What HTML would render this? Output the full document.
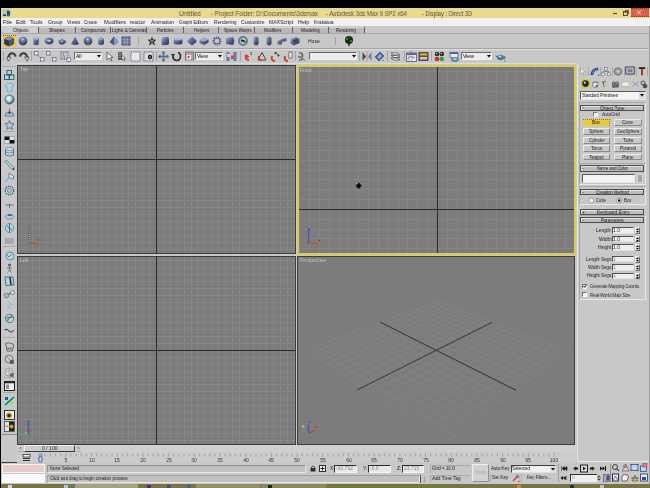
<!DOCTYPE html>
<html><head><meta charset="utf-8"><style>*{margin:0;padding:0;box-sizing:border-box}
html,body{width:650px;height:488px;overflow:hidden;background:#c8c8c8;font-family:"Liberation Sans",sans-serif;position:relative}
.a{position:absolute}
.t{position:absolute;white-space:nowrap;line-height:1;font-family:"Liberation Sans",sans-serif}
svg{overflow:visible}
.t{will-change:transform}</style></head><body>
<div class="a" style="left:0px;top:0px;width:650px;height:8px;background:#000"></div>
<div class="a" style="left:0px;top:8px;width:650px;height:10px;background:#e9d98b"></div>
<div class="a" style="left:0px;top:18px;width:650px;height:8px;background:#f0f0f0"></div>
<svg class="a" style="left:1.5px;top:8.5px" width="9" height="9" viewBox="0 0 9 9"><rect x="0.5" y="0.5" width="8" height="7" fill="#a8c8d8"/><path d="M5 1.5 L8 2 L8 7 L5 7Z" fill="#404860"/><rect x="1" y="5.5" width="3" height="1.5" fill="#303850"/><circle cx="6.8" cy="6.5" r="1" fill="#10a020"/></svg>
<div class="t" style="left:179px;top:10.2px;font-size:7px;color:#585340;transform:scaleX(0.9269);transform-origin:0 0;">Untitled</div>
<div class="t" style="left:210.5px;top:10.2px;font-size:7px;color:#585340;transform:scaleX(0.8731);transform-origin:0 0;">- Project Folder: D:\Documents\3dsmax</div>
<div class="t" style="left:325.5px;top:10.2px;font-size:7px;color:#585340;transform:scaleX(0.8461);transform-origin:0 0;">- Autodesk 3ds Max 9 SP2 x64</div>
<div class="t" style="left:421.5px;top:10.2px;font-size:7px;color:#585340;transform:scaleX(0.8034);transform-origin:0 0;">- Display : Direct 3D</div>
<div class="a" style="left:613px;top:13px;width:3.5px;height:1px;background:#5a3a30"></div>
<svg class="a" style="left:622px;top:9px" width="7" height="7" viewBox="0 0 7 7"><rect x="1.5" y="2.5" width="4" height="4" fill="none" stroke="#4a4030" stroke-width="0.9"/><path d="M3 1.5H6.5V5" fill="none" stroke="#4a4030" stroke-width="0.8"/><circle cx="3.5" cy="3.5" r="0.8" fill="#a02020"/></svg>
<div class="a" style="left:630.5px;top:8px;width:18.5px;height:9px;background:#d9604b;border-top:1px dotted #a03028;border-bottom:1px dotted #a03028"></div>
<svg class="a" style="left:636px;top:10px" width="6" height="5" viewBox="0 0 6 5"><path d="M1 0.5L5 4.5M5 0.5L1 4.5" stroke="#f0e4e0" stroke-width="1"/></svg>
<div class="t" style="left:3.2px;top:18.8px;font-size:6.2px;color:#1a1a1a;transform:scaleX(0.8914);transform-origin:0 0;">File</div>
<div class="t" style="left:16.1px;top:18.8px;font-size:6.2px;color:#1a1a1a;transform:scaleX(0.8808);transform-origin:0 0;">Edit</div>
<div class="t" style="left:29.9px;top:18.8px;font-size:6.2px;color:#1a1a1a;transform:scaleX(0.8718);transform-origin:0 0;">Tools</div>
<div class="t" style="left:47.5px;top:18.8px;font-size:6.2px;color:#1a1a1a;transform:scaleX(0.8371);transform-origin:0 0;">Group</div>
<div class="t" style="left:66.5px;top:18.8px;font-size:6.2px;color:#1a1a1a;transform:scaleX(0.8107);transform-origin:0 0;">Views</div>
<div class="t" style="left:84.4px;top:18.8px;font-size:6.2px;color:#1a1a1a;transform:scaleX(0.6997);transform-origin:0 0;">Create</div>
<div class="t" style="left:103.5px;top:18.8px;font-size:6.2px;color:#1a1a1a;transform:scaleX(0.8762);transform-origin:0 0;">Modifiers</div>
<div class="t" style="left:130.3px;top:18.8px;font-size:6.2px;color:#1a1a1a;transform:scaleX(0.7890);transform-origin:0 0;">reactor</div>
<div class="t" style="left:151.0px;top:18.8px;font-size:6.2px;color:#1a1a1a;transform:scaleX(0.8432);transform-origin:0 0;">Animation</div>
<div class="t" style="left:179.2px;top:18.8px;font-size:6.2px;color:#1a1a1a;transform:scaleX(0.7620);transform-origin:0 0;">Graph Editors</div>
<div class="t" style="left:213.5px;top:18.8px;font-size:6.2px;color:#1a1a1a;transform:scaleX(0.7947);transform-origin:0 0;">Rendering</div>
<div class="t" style="left:241.3px;top:18.8px;font-size:6.2px;color:#1a1a1a;transform:scaleX(0.8038);transform-origin:0 0;">Customize</div>
<div class="t" style="left:269.3px;top:18.8px;font-size:6.2px;color:#1a1a1a;transform:scaleX(0.8244);transform-origin:0 0;">MAXScript</div>
<div class="t" style="left:297.9px;top:18.8px;font-size:6.2px;color:#1a1a1a;transform:scaleX(0.8795);transform-origin:0 0;">Help</div>
<div class="t" style="left:313.5px;top:18.8px;font-size:6.2px;color:#1a1a1a;transform:scaleX(0.7874);transform-origin:0 0;">Krakatoa</div>
<div class="a" style="left:2px;top:27px;width:36px;height:6px;background:#cecece"></div>
<div class="t" style="left:12.7px;top:27.6px;font-size:5px;color:#222;transform:scaleX(0.9025);transform-origin:0 0;">Objects</div>
<div class="a" style="left:38px;top:27px;width:37px;height:6px;background:#bababa;border-top:1px solid #d4d4d4"></div>
<div class="t" style="left:48.7px;top:27.6px;font-size:5px;color:#222;transform:scaleX(0.9193);transform-origin:0 0;">Shapes</div>
<div class="a" style="left:75px;top:27px;width:35px;height:6px;background:#bababa;border-top:1px solid #d4d4d4"></div>
<div class="t" style="left:81.2px;top:27.6px;font-size:5px;color:#222;transform:scaleX(0.9085);transform-origin:0 0;">Compounds</div>
<div class="a" style="left:110px;top:27px;width:36px;height:6px;background:#bababa;border-top:1px solid #d4d4d4"></div>
<div class="t" style="left:112.0px;top:27.6px;font-size:5px;color:#222;transform:scaleX(0.8629);transform-origin:0 0;">Lights &amp; Cameras</div>
<div class="a" style="left:146px;top:27px;width:37px;height:6px;background:#bababa;border-top:1px solid #d4d4d4"></div>
<div class="t" style="left:156.7px;top:27.6px;font-size:5px;color:#222;transform:scaleX(0.8651);transform-origin:0 0;">Particles</div>
<div class="a" style="left:183px;top:27px;width:35px;height:6px;background:#bababa;border-top:1px solid #d4d4d4"></div>
<div class="t" style="left:193.5px;top:27.6px;font-size:5px;color:#222;transform:scaleX(0.8878);transform-origin:0 0;">Helpers</div>
<div class="a" style="left:218px;top:27px;width:36px;height:6px;background:#bababa;border-top:1px solid #d4d4d4"></div>
<div class="t" style="left:223.5px;top:27.6px;font-size:5px;color:#222;transform:scaleX(0.9253);transform-origin:0 0;">Space Warps</div>
<div class="a" style="left:254px;top:27px;width:38px;height:6px;background:#bababa;border-top:1px solid #d4d4d4"></div>
<div class="t" style="left:264.3px;top:27.6px;font-size:5px;color:#222;transform:scaleX(0.8622);transform-origin:0 0;">Modifiers</div>
<div class="a" style="left:292px;top:27px;width:36px;height:6px;background:#bababa;border-top:1px solid #d4d4d4"></div>
<div class="t" style="left:300.5px;top:27.6px;font-size:5px;color:#222;transform:scaleX(0.9263);transform-origin:0 0;">Modeling</div>
<div class="a" style="left:328px;top:27px;width:36px;height:6px;background:#bababa;border-top:1px solid #d4d4d4"></div>
<div class="t" style="left:335.7px;top:27.6px;font-size:5px;color:#222;transform:scaleX(0.8666);transform-origin:0 0;">Rendering</div>
<div class="a" style="left:37.5px;top:27px;width:1px;height:6px;background:#606060"></div>
<div class="a" style="left:74.5px;top:27px;width:1px;height:6px;background:#606060"></div>
<div class="a" style="left:109.5px;top:27px;width:1px;height:6px;background:#606060"></div>
<div class="a" style="left:145.5px;top:27px;width:1px;height:6px;background:#606060"></div>
<div class="a" style="left:182.5px;top:27px;width:1px;height:6px;background:#606060"></div>
<div class="a" style="left:217.5px;top:27px;width:1px;height:6px;background:#606060"></div>
<div class="a" style="left:253.5px;top:27px;width:1px;height:6px;background:#606060"></div>
<div class="a" style="left:291.5px;top:27px;width:1px;height:6px;background:#606060"></div>
<div class="a" style="left:327.5px;top:27px;width:1px;height:6px;background:#606060"></div>
<div class="a" style="left:363.5px;top:27px;width:1px;height:6px;background:#606060"></div>
<div class="a" style="left:0px;top:33px;width:650px;height:1px;background:#a8a8a8"></div>
<svg width="0" height="0" style="position:absolute">
<defs>
<radialGradient id="gb" cx="45%" cy="30%" r="70%"><stop offset="0" stop-color="#e0e6f8"/><stop offset="0.25" stop-color="#7a88b4"/><stop offset="0.7" stop-color="#46507a"/><stop offset="1" stop-color="#1e2440"/></radialGradient>
<linearGradient id="gbl" x1="0" y1="0" x2="1" y2="1"><stop offset="0" stop-color="#a8b4d8"/><stop offset="0.45" stop-color="#5c6894"/><stop offset="1" stop-color="#262e50"/></linearGradient>
<radialGradient id="gc" cx="40%" cy="35%" r="65%"><stop offset="0" stop-color="#f0ffff"/><stop offset="0.4" stop-color="#a8dce8"/><stop offset="1" stop-color="#3c6878"/></radialGradient>
</defs></svg>
<div class="a" style="left:3px;top:35px;width:12.5px;height:12px;background:#e4cc3c;border-top:1px dotted #c04a30"></div>
<svg class="a" style="left:4px;top:36px" width="10" height="10" viewBox="0 0 10 10"><path d="M0.5 3 L5 0.8 L9.5 2.5 L9.5 8 L5 10 L0.5 8Z" fill="#2e3658" stroke="#1c2038" stroke-width="0.5"/><path d="M0.5 3 L5 0.8 L9.5 2.5 L5 4.5Z" fill="#8a96c0"/><path d="M5 4.5 L9.5 2.5 L9.5 8 L5 10Z" fill="#4a5582"/></svg>
<svg class="a" style="left:18px;top:36px" width="10" height="10" viewBox="0 0 10 10"><circle cx="5" cy="5" r="4.3" fill="url(#gb)"/></svg>
<svg class="a" style="left:31px;top:36px" width="10" height="10" viewBox="0 0 10 10"><path d="M2 2.5 L8 2.5 L7.5 8.5 Q5 9.8 2.5 8.5Z" fill="url(#gbl)"/><ellipse cx="5" cy="2.5" rx="3" ry="1.3" fill="#a4b0d4"/></svg>
<svg class="a" style="left:44px;top:36px" width="10" height="10" viewBox="0 0 10 10"><ellipse cx="5" cy="5" rx="4.6" ry="3.6" fill="url(#gbl)"/><ellipse cx="5" cy="4.8" rx="2" ry="1" fill="#c8c8c8"/></svg>
<svg class="a" style="left:57px;top:36px" width="10" height="10" viewBox="0 0 10 10"><ellipse cx="5" cy="6" rx="3.2" ry="2.4" fill="url(#gb)"/><path d="M1 4 L2.5 6 L2 6.5Z" fill="#56628c"/><path d="M8 5 Q9.6 5 9 7" stroke="#56628c" fill="none"/><circle cx="5" cy="3.3" r="0.8" fill="#6c7aa6"/></svg>
<svg class="a" style="left:70px;top:36px" width="10" height="10" viewBox="0 0 10 10"><path d="M5 0.5 L9 8 Q5 10 1 8Z" fill="url(#gbl)"/></svg>
<svg class="a" style="left:83px;top:36px" width="10" height="10" viewBox="0 0 10 10"><circle cx="5" cy="5" r="4.3" fill="url(#gb)"/><circle cx="5" cy="8" r="0.9" fill="#20c040"/></svg>
<svg class="a" style="left:96px;top:36px" width="10" height="10" viewBox="0 0 10 10"><path d="M2 2.5 L8 2.5 L8 8 Q5 9.8 2 8Z" fill="url(#gbl)"/><ellipse cx="5" cy="2.5" rx="3" ry="1.3" fill="#a4b0d4"/><circle cx="5.5" cy="2" r="0.8" fill="#20c040"/></svg>
<svg class="a" style="left:108.5px;top:36px" width="10" height="10" viewBox="0 0 10 10"><path d="M5 0.5 L9.5 6 L5 9.5 L0.5 6Z" fill="#4a5680"/><path d="M5 0.5 L9.5 6 L5 9.5Z" fill="#8898c4"/></svg>
<svg class="a" style="left:121px;top:36px" width="10" height="10" viewBox="0 0 10 10"><rect x="1" y="1" width="8" height="8" fill="#6674a0" stroke="#3a4468" stroke-width="0.8"/><path d="M3.7 1V9M6.3 1V9M1 3.7H9M1 6.3H9" stroke="#aab4d4" stroke-width="0.6"/></svg>
<svg class="a" style="left:147px;top:36px" width="10" height="10" viewBox="0 0 10 10"><path d="M5 0.5 L6.2 3.5 L9.5 3.8 L7 6 L8 9.5 L5 7.6 L2 9.5 L3 6 L0.5 3.8 L3.8 3.5Z" fill="#303040"/><circle cx="5" cy="7" r="0.9" fill="#20c040"/><path d="M3 4 L7 4 L5 6Z" fill="#8890b0"/></svg>
<svg class="a" style="left:160px;top:36px" width="10" height="10" viewBox="0 0 10 10"><path d="M1.5 3 Q1.5 1.5 3 1.3 L7 1 Q9 1 9 3 L9 7 Q9 9 7 9 L3 9.3 Q1.5 9 1.5 7.5Z" fill="url(#gbl)"/></svg>
<svg class="a" style="left:173px;top:36px" width="10" height="10" viewBox="0 0 10 10"><rect x="0.5" y="2" width="9" height="6.5" rx="2.5" fill="url(#gbl)"/><ellipse cx="5" cy="3" rx="4" ry="1.4" fill="#aab6da"/></svg>
<svg class="a" style="left:187px;top:36px" width="10" height="10" viewBox="0 0 10 10"><path d="M5 0.5 L9.5 4.5 L9.5 6 L5 9.5 L0.5 6 L0.5 4.5Z" fill="url(#gbl)"/></svg>
<svg class="a" style="left:199px;top:36px" width="10" height="10" viewBox="0 0 10 10"><path d="M0.5 4 L5 1.5 L9.5 3.5 L9.5 6.5 L5 9 L0.5 7Z" fill="url(#gbl)"/><path d="M0.5 4 L5 1.5 L9.5 3.5 L5 5.5Z" fill="#a0acd0"/></svg>
<svg class="a" style="left:211.5px;top:36px" width="10" height="10" viewBox="0 0 10 10"><circle cx="5" cy="5" r="3.8" fill="none" stroke="#6a78a4" stroke-width="2" stroke-dasharray="1.3 1"/><circle cx="5" cy="5" r="3" fill="none" stroke="#4c5880" stroke-width="1"/></svg>
<svg class="a" style="left:225px;top:36px" width="10" height="10" viewBox="0 0 10 10"><path d="M1 2 L8 1 L9.5 5 L8 9 L1 8Z" fill="url(#gbl)"/></svg>
<svg class="a" style="left:238px;top:36px" width="10" height="10" viewBox="0 0 10 10"><circle cx="5" cy="5" r="4" fill="none" stroke="#6a78a4" stroke-width="2"/><path d="M3 4 L8 6" stroke="#111" stroke-width="1.5"/><circle cx="4" cy="6" r="1" fill="#20c040"/><circle cx="7.5" cy="6" r="1" fill="#20c040"/></svg>
<svg class="a" style="left:251px;top:36px" width="10" height="10" viewBox="0 0 10 10"><rect x="2.5" y="0.5" width="5" height="9" rx="2.5" fill="url(#gbl)"/></svg>
<svg class="a" style="left:264px;top:36px" width="10" height="10" viewBox="0 0 10 10"><rect x="2.5" y="0.5" width="5" height="9" rx="2.5" fill="url(#gbl)"/></svg>
<svg class="a" style="left:277px;top:36px" width="10" height="10" viewBox="0 0 10 10"><path d="M0.5 5 L5 3 L9.5 2 L9.5 5 L5 6 L5 8.5 L0.5 8.5Z" fill="url(#gbl)"/></svg>
<svg class="a" style="left:290px;top:36px" width="10" height="10" viewBox="0 0 10 10"><path d="M0.5 3 L6 1 L9.5 3 L9.5 7 L4 9.5 L0.5 7.5Z" fill="url(#gbl)"/><path d="M3 4 L7 3 L7 6 L3 7Z" fill="#3a4468"/></svg>
<svg class="a" style="left:344px;top:36px" width="10" height="10" viewBox="0 0 10 10"><circle cx="5" cy="4" r="4" fill="#1a2a1a"/><circle cx="3" cy="3" r="1" fill="#30a040"/><circle cx="7" cy="5" r="1" fill="#30a040"/><circle cx="5" cy="2" r="0.8" fill="#c03030"/><rect x="4.3" y="6" width="1.4" height="4" fill="#222"/></svg>
<div class="a" style="left:138px;top:37px;width:1px;height:8px;background:#a0a0a0"></div>
<div class="a" style="left:335px;top:37px;width:1px;height:8px;background:#a0a0a0"></div>
<div class="t" style="left:308px;top:38.5px;font-size:5px;color:#222;">Hose</div>
<div class="a" style="left:0px;top:48px;width:650px;height:1px;background:#a4a4a4"></div>
<div class="a" style="left:0px;top:49px;width:650px;height:1px;background:#e0e0e0"></div>
<div class="a" style="left:3px;top:51px;width:1px;height:10px;background:#a4a4a4"></div>
<svg class="a" style="left:7px;top:52px" width="11" height="11" viewBox="0 0 11 11"><path d="M8.8 4.6 Q7.5 0.8 4.5 1.3 Q2 1.8 1.6 5" fill="none" stroke="#3c3c3c" stroke-width="1.9"/><path d="M0 4.8 L3.9 5.2 L1.2 9.2Z" fill="#e4e4e4" stroke="#2a2a2a" stroke-width="0.7"/></svg>
<svg class="a" style="left:19px;top:52px" width="11" height="11" viewBox="0 0 11 11"><path d="M0.8 4.6 Q2 0.8 5 1.3 Q7.6 1.8 8 5" fill="none" stroke="#3c3c3c" stroke-width="1.9"/><path d="M9.6 4.8 L5.7 5.2 L8.4 9.2Z" fill="#e4e4e4" stroke="#2a2a2a" stroke-width="0.7"/></svg>
<div class="a" style="left:31px;top:51px;width:1px;height:10px;background:#a4a4a4"></div>
<svg class="a" style="left:34px;top:51px" width="11" height="11" viewBox="0 0 11 11"><rect x="0.5" y="0.5" width="3.5" height="3.5" fill="#e8f0ff" stroke="#506080" stroke-width="0.7"/><rect x="6.5" y="6.5" width="3.5" height="3.5" fill="#e8f0ff" stroke="#506080" stroke-width="0.7"/><path d="M3.5 3.5 L7 7" stroke="#c85040" stroke-width="0.9" stroke-dasharray="1 0.5"/></svg>
<svg class="a" style="left:46px;top:51px" width="11" height="11" viewBox="0 0 11 11"><rect x="0.5" y="0.5" width="3.5" height="3.5" fill="#e8f0ff" stroke="#506080" stroke-width="0.7"/><rect x="6.5" y="6.5" width="3.5" height="3.5" fill="#e8f0ff" stroke="#506080" stroke-width="0.7"/><path d="M3 3 L4.5 4.5M6 6 L7.5 7.5" stroke="#d06050" stroke-width="1"/></svg>
<svg class="a" style="left:60px;top:51px" width="11" height="11" viewBox="0 0 11 11"><rect x="1" y="1" width="7" height="7" fill="none" stroke="#6a7898" stroke-width="1.3" stroke-dasharray="1 0.7"/><path d="M3 2 L4.5 7" stroke="#c08050" stroke-width="1.2"/><rect x="7" y="7" width="3.5" height="3.5" fill="#e8f0ff" stroke="#506080" stroke-width="0.7"/></svg>
<div class="a" style="left:74px;top:52px;width:28px;height:8px;background:#ececec;border:1px solid #6a6a6a;border-right-color:#f0f0f0;border-bottom-color:#f0f0f0"></div>
<div class="a" style="left:96px;top:53px;width:5px;height:6px;background:#e4e4e4"></div>
<svg class="a" style="left:97px;top:55px" width="4" height="3" viewBox="0 0 4 3"><path d="M0 0H4L2 2.5Z" fill="#000"/></svg>
<div class="t" style="left:76px;top:53.5px;font-size:5px;color:#000;">All</div>
<svg class="a" style="left:106px;top:51px" width="8" height="11" viewBox="0 0 8 11"><path d="M1 1 L1 9 L3 7 L5 10 L6 9.5 L4.5 6.5 L7 6.5Z" fill="#f0f0f0" stroke="#404040" stroke-width="0.7"/></svg>
<svg class="a" style="left:117px;top:51px" width="9" height="11" viewBox="0 0 9 11"><rect x="1" y="1" width="4" height="8" fill="#5a5a5a"/><path d="M1.5 2.5H4.5M1.5 4.5H4.5M1.5 6.5H4.5" stroke="#b0b0b0" stroke-width="0.6"/><path d="M5 4 L5 9 L6 8 L7 10 L8 9.5L7 7.5 L8.5 7.5Z" fill="#e8e8e8" stroke="#333" stroke-width="0.5"/></svg>
<svg class="a" style="left:130px;top:51px" width="11" height="11" viewBox="0 0 11 11"><rect x="1" y="1" width="9" height="9" fill="#e4e8f0" stroke="#404040" stroke-width="0.8" stroke-dasharray="1 0.8"/></svg>
<svg class="a" style="left:143px;top:51px" width="11" height="11" viewBox="0 0 11 11"><rect x="1" y="1" width="9" height="9" fill="#d8dce4" stroke="#404040" stroke-width="0.8" stroke-dasharray="1 0.8"/><circle cx="7" cy="6" r="2.2" fill="#111"/><circle cx="7" cy="6" r="0.8" fill="#ddd"/></svg>
<div class="a" style="left:156px;top:51px;width:1px;height:10px;background:#a4a4a4"></div>
<svg class="a" style="left:158px;top:51px" width="11" height="11" viewBox="0 0 11 11"><path d="M5.5 0.5V10.5M0.5 5.5H10.5" stroke="#506a90" stroke-width="1.3"/><path d="M5.5 0 L3.5 2.5 L7.5 2.5Z M5.5 11 L3.5 8.5 L7.5 8.5Z M0 5.5 L2.5 3.5 L2.5 7.5Z M11 5.5 L8.5 3.5 L8.5 7.5Z" fill="#506a90"/></svg>
<svg class="a" style="left:171px;top:51px" width="11" height="11" viewBox="0 0 11 11"><path d="M2 4 Q1.5 9 5.5 9.5 Q9.5 9.5 9.5 5 Q9.5 2 7 1.5" fill="none" stroke="#2a2a2a" stroke-width="1.6"/><path d="M0 3 L4 3 L2 6Z" fill="#2a2a2a"/></svg>
<svg class="a" style="left:185px;top:51px" width="9" height="10" viewBox="0 0 9 10"><rect x="0.5" y="1" width="8" height="8" fill="#a8a8a8" stroke="#505050" stroke-width="0.6"/><rect x="1.5" y="4" width="4.5" height="4.5" fill="#f0f0f0"/><circle cx="3.5" cy="6" r="1.2" fill="#d04040"/></svg>
<div class="a" style="left:195px;top:52px;width:28px;height:8px;background:#ececec;border:1px solid #6a6a6a;border-right-color:#f0f0f0;border-bottom-color:#f0f0f0"></div>
<div class="a" style="left:217px;top:53px;width:5px;height:6px;background:#e4e4e4"></div>
<svg class="a" style="left:218px;top:55px" width="4" height="3" viewBox="0 0 4 3"><path d="M0 0H4L2 2.5Z" fill="#000"/></svg>
<div class="t" style="left:197px;top:53.5px;font-size:5px;color:#000;">View</div>
<svg class="a" style="left:226px;top:51px" width="11" height="11" viewBox="0 0 11 11"><rect x="0.5" y="1" width="3" height="9" fill="#6a7aa8"/><rect x="4" y="1" width="3" height="9" fill="#b8c4e0"/><rect x="7.5" y="1" width="3" height="9" fill="#6a7aa8"/><rect x="5" y="4.5" width="3" height="3.5" fill="#e04040"/><rect x="1.5" y="3" width="2" height="3" fill="#f0f0f0"/></svg>
<div class="a" style="left:240px;top:51px;width:1px;height:10px;background:#a4a4a4"></div>
<svg class="a" style="left:244px;top:51px" width="10" height="11" viewBox="0 0 10 11"><path d="M2 4 Q0.5 9 5 9" fill="none" stroke="#d04020" stroke-width="2"/><path d="M2 4 L4.5 6.5" stroke="#d04020" stroke-width="2"/><text x="6" y="4" font-size="4" fill="#222" font-family="Liberation Sans">3</text></svg>
<svg class="a" style="left:257px;top:51px" width="10" height="11" viewBox="0 0 10 11"><path d="M1 9 L5 1.5 L9 9Z" fill="none" stroke="#333" stroke-width="0.9"/><path d="M2 5 Q1 9 4.5 9" fill="none" stroke="#d04020" stroke-width="2"/></svg>
<svg class="a" style="left:270px;top:51px" width="10" height="11" viewBox="0 0 10 11"><path d="M2 5 Q0.5 10 5 10" fill="none" stroke="#d04020" stroke-width="2"/><path d="M5 1 L9 5" stroke="#333" stroke-width="0.8"/><circle cx="5.5" cy="2" r="1" fill="#333"/><circle cx="8.5" cy="4.5" r="1" fill="#333"/></svg>
<svg class="a" style="left:283px;top:51px" width="10" height="11" viewBox="0 0 10 11"><path d="M2 5 Q0.5 10 5 10" fill="none" stroke="#d04020" stroke-width="2"/><rect x="6" y="1" width="3" height="6" fill="#f0f0f0" stroke="#333" stroke-width="0.6"/></svg>
<div class="a" style="left:295px;top:51px;width:1px;height:10px;background:#a4a4a4"></div>
<svg class="a" style="left:297px;top:51px" width="11" height="11" viewBox="0 0 11 11"><path d="M2 2 L5 2 L5 9 L2 9" fill="none" stroke="#404040" stroke-width="1"/><path d="M6 3 L6 9 L7 8 L8 10" fill="#f0f0f0" stroke="#505050" stroke-width="0.6"/><path d="M1 6H4" stroke="#404040"/></svg>
<div class="a" style="left:309px;top:52px;width:48px;height:8px;background:#ececec;border:1px solid #6a6a6a;border-right-color:#f0f0f0;border-bottom-color:#f0f0f0"></div>
<div class="a" style="left:351px;top:53px;width:5px;height:6px;background:#e4e4e4"></div>
<svg class="a" style="left:352px;top:55px" width="4" height="3" viewBox="0 0 4 3"><path d="M0 0H4L2 2.5Z" fill="#000"/></svg>
<div class="a" style="left:359px;top:51px;width:1px;height:10px;background:#a4a4a4"></div>
<svg class="a" style="left:362px;top:51px" width="10" height="11" viewBox="0 0 10 11"><path d="M0.5 1 L4 5.5 L0.5 10Z" fill="#3a4a78"/><path d="M9.5 1 L6 5.5 L9.5 10Z" fill="#7080b0"/><path d="M5 0.5V10.5" stroke="#d05030" stroke-width="0.8" stroke-dasharray="1 0.7"/></svg>
<svg class="a" style="left:374px;top:51px" width="11" height="11" viewBox="0 0 11 11"><path d="M1 6 L6 1 L10 5 L5 10Z" fill="#4a6090" stroke="#2a3a60" stroke-width="0.5"/><path d="M3 6 L6 3 L8 5 L5 8Z" fill="#90b0d8"/><circle cx="9" cy="9.5" r="0.6" fill="#333"/></svg>
<div class="a" style="left:387px;top:51px;width:1px;height:10px;background:#a4a4a4"></div>
<svg class="a" style="left:390px;top:51px" width="11" height="11" viewBox="0 0 11 11"><path d="M1 2 L7 2 L10 4 L4 4Z M1 4.5 L7 4.5 L10 6.5 L4 6.5Z M1 7 L7 7 L10 9 L4 9Z" fill="#f4f4f4" stroke="#303030" stroke-width="0.6"/></svg>
<div class="a" style="left:404px;top:51px;width:1px;height:10px;background:#a4a4a4"></div>
<svg class="a" style="left:406px;top:51px" width="11" height="11" viewBox="0 0 11 11"><rect x="0.5" y="2" width="10" height="8.5" fill="#e8e8f0" stroke="#404860" stroke-width="0.7"/><rect x="0.5" y="2" width="10" height="2" fill="#5868a0"/><path d="M3 4V10M6 4V10" stroke="#8090c0" stroke-width="0.6"/><path d="M1.5 8 Q4 4 9 7" stroke="#d04040" fill="none" stroke-width="0.8"/><circle cx="5" cy="0.7" r="0.6" fill="#506090"/></svg>
<svg class="a" style="left:418px;top:51px" width="11" height="11" viewBox="0 0 11 11"><rect x="0.5" y="1" width="10" height="9" fill="#505050"/><rect x="2" y="2.5" width="7" height="2" fill="#f0b020"/><rect x="2" y="6" width="7" height="2.5" fill="#c8c8c8"/><path d="M4 4.5V6" stroke="#d04020"/></svg>
<div class="a" style="left:431px;top:51px;width:1px;height:10px;background:#a4a4a4"></div>
<svg class="a" style="left:434px;top:51px" width="11" height="11" viewBox="0 0 11 11"><circle cx="3" cy="3" r="2.3" fill="#2a2a2a"/><circle cx="7.8" cy="3" r="2.3" fill="#2a2a2a"/><circle cx="3" cy="8" r="2.3" fill="#c03030"/><circle cx="7.8" cy="8" r="2.3" fill="#30a040"/><circle cx="2.5" cy="2.5" r="0.8" fill="#c0c0c0"/><circle cx="7.3" cy="2.5" r="0.8" fill="#c0c0c0"/></svg>
<svg class="a" style="left:449px;top:51px" width="11" height="12" viewBox="0 0 11 12"><rect x="1" y="1.5" width="8" height="5" fill="#e8ecf4" stroke="#405080" stroke-width="0.7"/><rect x="1" y="1.5" width="8" height="1.5" fill="#4060a0"/><ellipse cx="6" cy="8.5" rx="4" ry="2.5" fill="#5a8aa8"/><ellipse cx="6" cy="8" rx="2" ry="1" fill="#a0d0e8"/></svg>
<div class="a" style="left:461px;top:52px;width:31px;height:8px;background:#ececec;border:1px solid #6a6a6a;border-right-color:#f0f0f0;border-bottom-color:#f0f0f0"></div>
<div class="a" style="left:486px;top:53px;width:5px;height:6px;background:#e4e4e4"></div>
<svg class="a" style="left:487px;top:55px" width="4" height="3" viewBox="0 0 4 3"><path d="M0 0H4L2 2.5Z" fill="#000"/></svg>
<div class="t" style="left:463px;top:53.5px;font-size:5px;color:#000;">View</div>
<svg class="a" style="left:495px;top:51px" width="11" height="11" viewBox="0 0 11 11"><ellipse cx="5.5" cy="6.5" rx="3.5" ry="2.8" fill="#4a7a98"/><ellipse cx="5" cy="5.5" rx="1.5" ry="1" fill="#b0e0f0"/><path d="M1 4.5 L2.5 6.5M9 5 Q10.5 6 9.5 8" stroke="#305870" fill="none"/><circle cx="10" cy="10" r="0.6" fill="#333"/></svg>
<div class="a" style="left:0px;top:63px;width:577px;height:1px;background:#dadada"></div>
<div class="a" style="left:17px;top:65px;width:279px;height:189px;background:#7c7c7c;border:1px solid #3c3c3c"></div>
<svg class="a" style="left:18px;top:66px" width="277" height="187" viewBox="0 0 277 187"><path d="M0.5 0V187M7.5 0V187M14.5 0V187M21.5 0V187M28.5 0V187M35.5 0V187M41.5 0V187M48.5 0V187M55.5 0V187M62.5 0V187M69.5 0V187M76.5 0V187M83.5 0V187M90.5 0V187M97.5 0V187M104.5 0V187M110.5 0V187M117.5 0V187M124.5 0V187M131.5 0V187M145.5 0V187M152.5 0V187M159.5 0V187M166.5 0V187M173.5 0V187M179.5 0V187M186.5 0V187M193.5 0V187M200.5 0V187M207.5 0V187M214.5 0V187M221.5 0V187M228.5 0V187M235.5 0V187M242.5 0V187M248.5 0V187M255.5 0V187M262.5 0V187M269.5 0V187M276.5 0V187M0 3.5H277M0 10.5H277M0 17.5H277M0 24.5H277M0 31.5H277M0 38.5H277M0 45.5H277M0 52.5H277M0 58.5H277M0 65.5H277M0 72.5H277M0 79.5H277M0 86.5H277M0 100.5H277M0 107.5H277M0 114.5H277M0 121.5H277M0 127.5H277M0 134.5H277M0 141.5H277M0 148.5H277M0 155.5H277M0 162.5H277M0 169.5H277M0 176.5H277M0 183.5H277" stroke="#868686" stroke-width="1" fill="none" shape-rendering="crispEdges"/><path d="M138.5 0V187M0 93.5H277" stroke="#2a2a2a" stroke-width="1" fill="none" shape-rendering="crispEdges"/></svg>
<div class="a" style="left:297px;top:65px;width:279px;height:190px;background:#7c7c7c;border:2px solid #dccb44"></div>
<svg class="a" style="left:299px;top:67px" width="275" height="186" viewBox="0 0 275 186"><path d="M0.5 0V186M10.5 0V186M20.5 0V186M30.5 0V186M40.5 0V186M49.5 0V186M59.5 0V186M69.5 0V186M79.5 0V186M89.5 0V186M99.5 0V186M108.5 0V186M118.5 0V186M128.5 0V186M148.5 0V186M158.5 0V186M167.5 0V186M177.5 0V186M187.5 0V186M197.5 0V186M207.5 0V186M217.5 0V186M226.5 0V186M236.5 0V186M246.5 0V186M256.5 0V186M266.5 0V186M0 4.5H275M0 14.5H275M0 24.5H275M0 34.5H275M0 44.5H275M0 53.5H275M0 63.5H275M0 73.5H275M0 83.5H275M0 93.5H275M0 103.5H275M0 112.5H275M0 122.5H275M0 132.5H275M0 152.5H275M0 162.5H275M0 171.5H275M0 181.5H275" stroke="#868686" stroke-width="1" fill="none" shape-rendering="crispEdges"/><path d="M138.5 0V186M0 142.5H275" stroke="#2a2a2a" stroke-width="1" fill="none" shape-rendering="crispEdges"/></svg>
<div class="a" style="left:17px;top:256px;width:279px;height:189px;background:#7c7c7c;border:1px solid #3c3c3c"></div>
<svg class="a" style="left:18px;top:257px" width="277" height="187" viewBox="0 0 277 187"><path d="M0.5 0V187M7.5 0V187M14.5 0V187M21.5 0V187M28.5 0V187M35.5 0V187M41.5 0V187M48.5 0V187M55.5 0V187M62.5 0V187M69.5 0V187M76.5 0V187M83.5 0V187M90.5 0V187M97.5 0V187M104.5 0V187M110.5 0V187M117.5 0V187M124.5 0V187M131.5 0V187M145.5 0V187M152.5 0V187M159.5 0V187M166.5 0V187M173.5 0V187M179.5 0V187M186.5 0V187M193.5 0V187M200.5 0V187M207.5 0V187M214.5 0V187M221.5 0V187M228.5 0V187M235.5 0V187M242.5 0V187M248.5 0V187M255.5 0V187M262.5 0V187M269.5 0V187M276.5 0V187M0 3.5H277M0 10.5H277M0 17.5H277M0 24.5H277M0 31.5H277M0 38.5H277M0 45.5H277M0 51.5H277M0 58.5H277M0 65.5H277M0 72.5H277M0 79.5H277M0 86.5H277M0 100.5H277M0 107.5H277M0 114.5H277M0 120.5H277M0 127.5H277M0 134.5H277M0 141.5H277M0 148.5H277M0 155.5H277M0 162.5H277M0 169.5H277M0 176.5H277M0 183.5H277" stroke="#868686" stroke-width="1" fill="none" shape-rendering="crispEdges"/><path d="M138.5 0V187M0 93.5H277" stroke="#2a2a2a" stroke-width="1" fill="none" shape-rendering="crispEdges"/></svg>
<div class="a" style="left:297px;top:256px;width:278px;height:189px;background:#7c7c7c;border:1px solid #3c3c3c"></div>
<svg class="a" style="left:298px;top:257px" width="277" height="187" viewBox="0 0 277 187"><path d="M139.00 44.00L7.00 93.00M139.00 44.00L271.00 94.00M144.26 45.99L12.14 96.36M133.97 45.87L266.71 97.17M149.64 48.03L17.44 99.81M128.82 47.78L262.29 100.44M155.13 50.11L22.89 103.37M123.53 49.74L257.72 103.83M160.75 52.24L28.50 107.03M118.11 51.76L253.00 107.32M166.49 54.41L34.28 110.80M112.54 53.82L248.11 110.93M172.36 56.64L40.23 114.68M106.82 55.94L243.06 114.67M178.36 58.91L46.37 118.69M100.95 58.12L237.83 118.54M184.50 61.24L52.71 122.82M94.92 60.36L232.41 122.55M190.79 63.62L59.25 127.09M88.71 62.67L226.79 126.71M197.22 66.05L66.00 131.50M82.34 65.03L220.96 131.02M203.80 68.55L72.98 136.05M75.78 67.47L214.91 135.50M210.55 71.10L80.19 140.75M69.02 69.98L208.63 140.15M217.46 73.72L87.65 145.62M62.07 72.56L202.10 144.98M224.54 76.40L95.37 150.66M54.91 75.21L195.30 150.01M231.80 79.15L103.36 155.87M47.54 77.95L188.23 155.24M239.24 81.97L111.64 161.28M39.93 80.78L180.86 160.69M246.87 84.86L120.23 166.88M32.08 83.69L173.17 166.38M254.71 87.83L129.14 172.69M23.99 86.69L165.15 172.31M262.75 90.87L138.39 178.73M15.63 89.80L156.77 178.51M271.00 94.00L148.00 185.00M7.00 93.00L148.00 185.00" stroke="#8c8c8c" stroke-width="0.7" stroke-dasharray="1 1" fill="none"/><path d="M82.30000000000001 65.19999999999999L218 133.3M194.39999999999998 65.19999999999999L59.30000000000001 132.89999999999998" stroke="#333" stroke-width="1" fill="none"/></svg>
<div class="t" style="left:20px;top:67px;font-size:5px;color:#c4c4c4;">Top</div>
<div class="t" style="left:300px;top:67.5px;font-size:5px;color:#c4c4c4;">Front</div>
<div class="t" style="left:20px;top:258px;font-size:5px;color:#c4c4c4;">Left</div>
<div class="t" style="left:300px;top:258px;font-size:5px;color:#c4c4c4;">Perspective</div>
<svg class="a" style="left:0px;top:0px" width="650" height="488" viewBox="0 0 650 488"><path d="M29.7 243.5V228" stroke="#4a5a90" stroke-width="2"/><path d="M29.7 243.5V228" stroke="#c8c060" stroke-width="1.4" stroke-dasharray="1 1.2"/><path d="M29 243.5H38.3" stroke="#c84a30" stroke-width="1.2"/><circle cx="39.5" cy="240" r="0.9" fill="#d04020"/><path d="M308.6 243.5V228" stroke="#5050b8" stroke-width="1.5"/><path d="M308.6 243.5H318.6" stroke="#d05020" stroke-width="1.2"/><circle cx="319.5" cy="240.3" r="0.9" fill="#c02020"/><circle cx="309.5" cy="230" r="0.9" fill="#5050b8"/><path d="M28.4 434.7V420.5" stroke="#4a5aa8" stroke-width="1.5"/><path d="M28.4 434.7H18" stroke="#60a060" stroke-width="1.2"/><circle cx="20" cy="431" r="1" fill="#40a040"/><circle cx="30" cy="431" r="1" fill="#d04040"/><circle cx="26" cy="433" r="0.8" fill="#e0e060"/><path d="M308.4 433.4V424.8" stroke="#5050b8" stroke-width="1.5"/><path d="M308.4 433.4L301.7 428.5" stroke="#60a060" stroke-width="1.1"/><path d="M308.4 433.4L315.2 430" stroke="#d04030" stroke-width="1.1"/><circle cx="316.4" cy="427.3" r="0.9" fill="#d02020"/><circle cx="303.2" cy="426.4" r="1.2" fill="#c8c060"/><circle cx="309.7" cy="422" r="0.9" fill="#5050b8"/><path d="M358.5 182.8 L361.3 185.5 L358.8 188.8 L356 186Z" fill="#050505" stroke="#151515" stroke-width="0.8"/><circle cx="357" cy="183.6" r="0.7" fill="#d8d8d8"/></svg>
<div class="a" style="left:1px;top:63px;width:16px;height:382px;background:#c8c8c8"></div>
<div class="a" style="left:2px;top:66px;width:14px;height:1px;background:#a8a8a8"></div>
<svg class="a" style="left:4px;top:69.5px" width="11" height="10" viewBox="0 0 11 10"><rect x="3" y="0.5" width="4.5" height="4" fill="#a8d8e8" stroke="#304050" stroke-width="0.8"/><rect x="0.5" y="5" width="4.5" height="4.5" fill="#a8d8e8" stroke="#304050" stroke-width="0.8"/><rect x="5.5" y="5" width="4.5" height="4.5" fill="#a8d8e8" stroke="#304050" stroke-width="0.8"/><circle cx="7.5" cy="5" r="0.9" fill="#10a030"/></svg>
<svg class="a" style="left:4px;top:82.5px" width="11" height="9" viewBox="0 0 11 9"><path d="M1 2 L3.5 0.5 L7 0.5 L10 2 L9 4 L8 3.5 L8 8.5 L3 8.5 L3 3.5 L2 4Z" fill="#a8d8e4" stroke="#6a98a8" stroke-width="0.6"/></svg>
<svg class="a" style="left:4px;top:94px" width="11" height="11" viewBox="0 0 11 11"><circle cx="5.5" cy="5.5" r="4.5" fill="url(#gc)" stroke="#505a60" stroke-width="0.8"/><path d="M4 3 Q7 5 5 8" stroke="#f8ffff" fill="none" stroke-width="0.8"/></svg>
<svg class="a" style="left:4px;top:107.5px" width="11" height="9" viewBox="0 0 11 9"><path d="M5.5 0.5 L5.5 4" stroke="#506070" stroke-width="0.8"/><path d="M2 5 L9 5 L10 8 L1 8Z" fill="#a0d0e0" stroke="#304858" stroke-width="0.6"/><rect x="4.5" y="3.5" width="2" height="2" fill="#2a3a48"/></svg>
<svg class="a" style="left:4px;top:120px" width="11" height="10" viewBox="0 0 11 10"><path d="M5.5 0.5 L6.8 3.5 L10 3.8 L7.6 6 L8.4 9.5 L5.5 7.6 L2.6 9.5 L3.4 6 L1 3.8 L4.2 3.5Z" fill="#a8d0e0" stroke="#405868" stroke-width="0.7"/></svg>
<svg class="a" style="left:4px;top:136px" width="11" height="8" viewBox="0 0 11 8"><rect x="0.5" y="0.5" width="10" height="7" fill="#101010"/><rect x="5.5" y="0.5" width="5" height="3.5" fill="#d0e4ec"/><rect x="0.5" y="4" width="5" height="3.5" fill="#d0e4ec"/></svg>
<svg class="a" style="left:4px;top:147px" width="11" height="10" viewBox="0 0 11 10"><path d="M1.5 2 L9.5 2 L9.5 8 Q5.5 10 1.5 8Z" fill="#b0dce8" stroke="#405060" stroke-width="0.7"/><ellipse cx="5.5" cy="2" rx="4" ry="1.3" fill="#e0f4f8" stroke="#405060" stroke-width="0.6"/><path d="M1.5 5 Q5.5 7 9.5 5" stroke="#405060" fill="none" stroke-width="0.5"/></svg>
<svg class="a" style="left:4px;top:159.5px" width="11" height="10" viewBox="0 0 11 10"><path d="M1 1.5 L3 0.5 L10 7.5 L10 9.5 L8 9.5Z" fill="#a8d8e4" stroke="#405868" stroke-width="0.6"/><path d="M9 8.5 L10 9.5" stroke="#111" stroke-width="1.2"/></svg>
<svg class="a" style="left:4px;top:173px" width="11" height="10" viewBox="0 0 11 10"><path d="M5 0.5 L9.5 3 L9.5 6 L5 4.5Z" fill="#e8f4f8" stroke="#405868" stroke-width="0.7"/><path d="M5 5 L1 9" stroke="#80c0d8" stroke-width="2.2"/></svg>
<svg class="a" style="left:4px;top:184.5px" width="11" height="11" viewBox="0 0 11 11"><circle cx="5.5" cy="5.5" r="4.2" fill="#a8d8e4" stroke="#405868" stroke-width="1.2" stroke-dasharray="1.4 0.8"/><circle cx="5.5" cy="5.5" r="2" fill="#c8c8c8" stroke="#405868" stroke-width="0.6"/></svg>
<svg class="a" style="left:4px;top:201px" width="11" height="7" viewBox="0 0 11 7"><path d="M1 4H10M5.5 1V7" stroke="#506070" stroke-width="0.8"/><circle cx="5.5" cy="2" r="1" fill="#a0d0e0"/></svg>
<svg class="a" style="left:4px;top:212.5px" width="11" height="7" viewBox="0 0 11 7"><path d="M1 4 L3 2 L8 1.5 L10 3.5 L8 6 L3 6Z" fill="#a0d4e0" stroke="#405868" stroke-width="0.5"/><rect x="4" y="1.5" width="4" height="1.2" fill="#304060"/></svg>
<svg class="a" style="left:4px;top:222.5px" width="11" height="10" viewBox="0 0 11 10"><ellipse cx="5.5" cy="5" rx="4" ry="4.5" fill="#a8dce8" stroke="#506878" stroke-width="0.6"/><path d="M5.5 0.5V9.5M3 3L8 7" stroke="#304050" stroke-width="0.7"/></svg>
<svg class="a" style="left:4px;top:236.5px" width="11" height="7" viewBox="0 0 11 7"><path d="M1 2H10M1 4H10M1 6H10" stroke="#606a78" stroke-width="0.9" stroke-dasharray="1.5 0.7"/></svg>
<svg class="a" style="left:4px;top:251px" width="11" height="10" viewBox="0 0 11 10"><circle cx="6" cy="5" r="4" fill="#b0dce8" stroke="#506878" stroke-width="0.7"/><path d="M2 3 L5 6 L8 3" stroke="#405868" fill="none" stroke-width="0.7"/></svg>
<svg class="a" style="left:4px;top:263px" width="11" height="10" viewBox="0 0 11 10"><circle cx="5.5" cy="2" r="1.5" fill="#506070"/><path d="M5.5 3.5V7M3 5H8M5.5 7 L3.5 9.5M5.5 7 L7.5 9.5" stroke="#506070" stroke-width="0.8"/></svg>
<svg class="a" style="left:4px;top:275.5px" width="11" height="10" viewBox="0 0 11 10"><path d="M1 1 L9 1 L10 9 L2 9.5Z" fill="#a8d8e8" stroke="#304858" stroke-width="0.7"/><path d="M6 1 L7 9" stroke="#203040" stroke-width="1.6"/></svg>
<svg class="a" style="left:4px;top:290px" width="11" height="8" viewBox="0 0 11 8"><circle cx="2.5" cy="5.5" r="2.2" fill="#a0c8d0" stroke="#405060" stroke-width="0.6"/><circle cx="8.5" cy="2.5" r="2" fill="#e0f0f8" stroke="#405060" stroke-width="0.6"/><path d="M4 4.5 L7 3" stroke="#405060"/></svg>
<svg class="a" style="left:4px;top:301px" width="11" height="10" viewBox="0 0 11 10"><path d="M4 0.5 L6 3 L5 6 L3 9.5M5 6 L8 8M5 3 L8.5 3.5" stroke="#88c0d0" stroke-width="1" fill="none"/></svg>
<svg class="a" style="left:4px;top:313px" width="11" height="11" viewBox="0 0 11 11"><circle cx="5.5" cy="5.5" r="4.2" fill="#b0d8e0" stroke="#404850" stroke-width="0.7"/><path d="M2 5 L9 4M3 8 L8 2" stroke="#203040" stroke-width="0.6"/><circle cx="4" cy="7" r="0.8" fill="#10a030"/></svg>
<svg class="a" style="left:4px;top:328px" width="11" height="6" viewBox="0 0 11 6"><path d="M0.5 2 Q3 0.5 5 3 Q7 5.5 10 2" stroke="#304870" fill="none" stroke-width="1.1"/></svg>
<svg class="a" style="left:4px;top:342px" width="11" height="10" viewBox="0 0 11 10"><path d="M2 3 Q0.5 1 3 1 Q5.5 0 6.5 1.5 Q10 1 9.5 4 L8.5 9 L3 9Z" fill="none" stroke="#404040" stroke-width="0.7"/><path d="M4 5V8M7 5V8M4 6.5H7" stroke="#404040" stroke-width="0.6"/></svg>
<svg class="a" style="left:4px;top:353.5px" width="11" height="11" viewBox="0 0 11 11"><circle cx="5" cy="5" r="4" fill="none" stroke="#606060" stroke-width="0.8"/><path d="M2.5 2.5L7 7" stroke="#606060" stroke-width="0.6"/><text x="6" y="10" font-size="4.5" fill="#222" font-family="Liberation Sans" font-weight="bold">M</text></svg>
<svg class="a" style="left:4px;top:366.5px" width="11" height="11" viewBox="0 0 11 11"><circle cx="5" cy="5" r="4" fill="#d8d8d8" stroke="#909090" stroke-width="0.8"/><path d="M2 4H8M5 1V9" stroke="#909090" stroke-width="0.6"/><text x="6" y="10" font-size="4.5" fill="#333" font-family="Liberation Sans" font-weight="bold">M</text></svg>
<svg class="a" style="left:4px;top:381px" width="11" height="10" viewBox="0 0 11 10"><rect x="0.5" y="0.5" width="10" height="9" fill="#f0f0f0" stroke="#202020" stroke-width="1"/><rect x="0.5" y="0.5" width="10" height="1.8" fill="#202020"/><rect x="2" y="3.5" width="3" height="4.5" fill="#909090"/><circle cx="7.5" cy="1" r="0.6" fill="#20c040"/></svg>
<svg class="a" style="left:4px;top:396px" width="11" height="10" viewBox="0 0 11 10"><rect x="0.5" y="0.5" width="10" height="9" fill="#a8d8e0"/><path d="M1 9 L10 1" stroke="#108030" stroke-width="1.6"/><rect x="6" y="5.5" width="3" height="3" fill="#e0c040"/><rect x="1" y="1" width="3" height="3" fill="#3050a0"/></svg>
<svg class="a" style="left:4px;top:409.5px" width="11" height="10" viewBox="0 0 11 10"><rect x="0.5" y="0.5" width="10" height="9" fill="#f0f0f0" stroke="#202020" stroke-width="0.9"/><circle cx="5" cy="5.5" r="3" fill="#c8a030"/><circle cx="5" cy="5.5" r="1.6" fill="#103010"/><circle cx="5" cy="0.8" r="0.6" fill="#20c040"/></svg>
<svg class="a" style="left:4px;top:420.5px" width="11" height="11" viewBox="0 0 11 11"><rect x="0.5" y="0.5" width="10" height="10" fill="#d8e4e8" stroke="#303030" stroke-width="0.7"/><rect x="5" y="1" width="5" height="9" fill="#202010"/><circle cx="7.5" cy="5.5" r="2" fill="#c8a030"/><path d="M1.5 6 L3 4 L4.5 6Z" fill="#c07050"/></svg>
<div class="a" style="left:3px;top:131px;width:12px;height:1px;background:#a8a8a8"></div>
<div class="a" style="left:3px;top:246px;width:12px;height:1px;background:#a8a8a8"></div>
<div class="a" style="left:3px;top:337px;width:12px;height:1px;background:#a8a8a8"></div>
<div class="a" style="left:3px;top:377px;width:12px;height:1px;background:#a8a8a8"></div>
<div class="a" style="left:3px;top:392px;width:12px;height:1px;background:#a8a8a8"></div>
<div class="a" style="left:1px;top:434px;width:16px;height:1px;background:#909090"></div>
<div class="a" style="left:576px;top:63px;width:74px;height:399px;background:#c8c8c8"></div>
<div class="a" style="left:577px;top:63px;width:1px;height:399px;background:#e4e4e4"></div>
<div class="a" style="left:649px;top:26px;width:1px;height:462px;background:#9a9a9a"></div>
<svg class="a" style="left:579px;top:67px" width="9" height="9" viewBox="0 0 9 9"><path d="M1.5 1 L1.5 7 L3 5.8 L4.3 8.2 L5.3 7.7 L4.2 5.4 L6.2 5.3Z" fill="#f8f8f8" stroke="#8a8a8a" stroke-width="0.6"/><circle cx="6.3" cy="6.5" r="1.6" fill="#d0d0d0" stroke="#9a9a9a" stroke-width="0.5"/></svg>
<svg class="a" style="left:590px;top:67px" width="10" height="9" viewBox="0 0 10 9"><path d="M1.8 8 Q2.2 2.3 8.2 1.8" stroke="#2a4890" stroke-width="2.8" fill="none"/><path d="M2.3 6.5 Q3 3 7 2.4" stroke="#9ab8e8" stroke-width="0.7" fill="none"/><circle cx="8.8" cy="8.2" r="0.6" fill="#333"/></svg>
<svg class="a" style="left:601px;top:67px" width="10" height="9" viewBox="0 0 10 9"><rect x="3.5" y="0.5" width="3" height="2.5" fill="#eef2f8" stroke="#5a6a88" stroke-width="0.6"/><rect x="0.5" y="6" width="3" height="2.5" fill="#eef2f8" stroke="#5a6a88" stroke-width="0.6"/><rect x="6.5" y="6" width="3" height="2.5" fill="#eef2f8" stroke="#5a6a88" stroke-width="0.6"/><path d="M5 3V4.5M2 6V4.5H8V6" stroke="#5a6a88" stroke-width="0.6" fill="none"/></svg>
<svg class="a" style="left:613px;top:67px" width="10" height="9" viewBox="0 0 10 9"><circle cx="5" cy="4.5" r="3.6" fill="#b8b8b8" stroke="#505050" stroke-width="0.9"/><circle cx="5" cy="4.5" r="1.8" fill="#d8d8d8" stroke="#707070" stroke-width="0.6"/><path d="M0.5 4.5H1.5M8.5 4.5H9.5" stroke="#40a060" stroke-width="0.7"/></svg>
<svg class="a" style="left:625px;top:66px" width="10" height="10" viewBox="0 0 10 10"><rect x="0.8" y="1" width="8.4" height="7" fill="#d8dce8" stroke="#2a2a2a" stroke-width="0.9"/><rect x="2.2" y="2.4" width="5.6" height="4.2" fill="#7a90c8"/><path d="M4.5 3 L7.3 6H4.5Z" fill="#d05040"/><path d="M3.5 8.8H6.5" stroke="#40905a" stroke-width="0.7"/></svg>
<svg class="a" style="left:638px;top:66px" width="8" height="10" viewBox="0 0 8 10"><path d="M0.8 1.2 H7.2 V3 H0.8Z" fill="#202020"/><rect x="3" y="3" width="2" height="6.3" fill="#a83828"/></svg>
<div class="a" style="left:588px;top:67px;width:1px;height:9px;background:#a8a8a8"></div>
<div class="a" style="left:599.5px;top:67px;width:1px;height:9px;background:#a8a8a8"></div>
<div class="a" style="left:611.5px;top:67px;width:1px;height:9px;background:#a8a8a8"></div>
<div class="a" style="left:623.5px;top:67px;width:1px;height:9px;background:#a8a8a8"></div>
<div class="a" style="left:635.5px;top:67px;width:1px;height:9px;background:#a8a8a8"></div>
<div class="a" style="left:647px;top:67px;width:1px;height:9px;background:#a8a8a8"></div>
<div class="a" style="left:580.5px;top:79px;width:9.5px;height:9px;background:#e0c83c"></div>
<svg class="a" style="left:581px;top:79px" width="9" height="9" viewBox="0 0 9 9"><circle cx="4.5" cy="4.5" r="3.1" fill="#202838" stroke="#101018" stroke-width="0.5"/><circle cx="3.8" cy="3.7" r="1.1" fill="#c8d0e4"/></svg>
<svg class="a" style="left:591px;top:79.5px" width="9" height="9" viewBox="0 0 9 9"><circle cx="4.3" cy="4.8" r="2.8" fill="#e4e4e4" stroke="#606060" stroke-width="0.7"/><path d="M1.5 2.5 Q4.5 0.5 7.5 2.5" stroke="#707070" fill="none" stroke-width="0.7"/><circle cx="5.5" cy="6" r="1" fill="#505050"/></svg>
<svg class="a" style="left:601px;top:79.5px" width="9" height="9" viewBox="0 0 9 9"><path d="M1 2.2 L5 1.5 M2.2 1.8 L3 7" stroke="#505050" stroke-width="0.8" fill="none"/><rect x="4.5" y="4.5" width="3.2" height="2.6" fill="#d8cc70"/></svg>
<svg class="a" style="left:611px;top:79.5px" width="9" height="9" viewBox="0 0 9 9"><rect x="1.5" y="2.3" width="6" height="4.8" fill="#6a6a6a" stroke="#404040" stroke-width="0.5"/><circle cx="3" cy="2.2" r="1.2" fill="#8a8a8a"/><circle cx="6" cy="2.2" r="1.2" fill="#8a8a8a"/><circle cx="2.5" cy="7" r="0.7" fill="#a02020"/></svg>
<svg class="a" style="left:621px;top:80px" width="9" height="8" viewBox="0 0 9 8"><path d="M0.8 2.2 L6 1.5 L8.2 3.2 L8.2 6.8 L1 6.8Z" fill="#ececec" stroke="#9a9a9a" stroke-width="0.5"/><path d="M2 6.3 L8 6.3" stroke="#d0b070" stroke-width="0.6"/></svg>
<svg class="a" style="left:631px;top:80px" width="9" height="8" viewBox="0 0 9 8"><path d="M1.5 1.5 L7.5 6.5 M7.5 1.5 L1.5 6.5" stroke="#8a98c0" stroke-width="1"/><circle cx="4.5" cy="4" r="1.3" fill="#a0acd0"/></svg>
<svg class="a" style="left:640px;top:79.5px" width="8" height="9" viewBox="0 0 8 9"><circle cx="3" cy="3" r="2" fill="none" stroke="#404040" stroke-width="0.9"/><circle cx="5" cy="6" r="2" fill="#505050" stroke="#303030" stroke-width="0.5"/></svg>
<div class="a" style="left:580px;top:91px;width:66px;height:9px;background:#f4f4f4;border:1px solid #5a5a5a;border-right-color:#e8e8e8;border-bottom-color:#e8e8e8"></div>
<div class="a" style="left:639px;top:92px;width:6px;height:7px;background:#dcdcdc"></div>
<svg class="a" style="left:640px;top:94px" width="4" height="3" viewBox="0 0 4 3"><path d="M0 0H4L2 2.5Z" fill="#000"/></svg>
<div class="t" style="left:581.8px;top:92.6px;font-size:5px;color:#111;transform:scaleX(0.8303);transform-origin:0 0;">Standard Primitives</div>
<div class="a" style="left:578.5px;top:102px;width:67px;height:62px;border:1px solid #a8a8a8;border-right-color:#e8e8e8;border-bottom-color:#e8e8e8"></div>
<div class="a" style="left:580px;top:104.8px;width:64px;height:6.0px;background:#bdbdbd;border:1px solid #4e4e4e;box-shadow:inset 1px 1px 0 #e4e4e4"></div>
<div class="t" style="left:582.2px;top:105.39999999999999px;font-size:5px;color:#222;">-</div>
<div class="t" style="left:599.7px;top:105.89999999999999px;font-size:5px;color:#1a1a1a;transform:scaleX(0.9137);transform-origin:0 0;">Object Type</div>
<div class="a" style="left:592.5px;top:111.5px;width:5.5px;height:5.5px;background:#f0f0f0;border:1px solid #7a7a7a;border-right-color:#fff;border-bottom-color:#fff"></div>
<div class="t" style="left:601.8px;top:112.4px;font-size:5px;color:#222;transform:scaleX(0.8817);transform-origin:0 0;">AutoGrid</div>
<div class="a" style="left:582.5px;top:119.4px;width:27.5px;height:6.6px;background:#e8cc38;border-top:1px dotted #c05a30;border-right:1px dotted #c05a30"></div>
<div class="a" style="left:614px;top:119.4px;width:27.5px;height:6.8px;background:#c9c9c9;border:1px solid #ececec;border-right-color:#8a8a8a;border-bottom-color:#8a8a8a"></div>
<div class="t" style="left:592.2px;top:120.4px;font-size:5px;color:#1a1a1a;transform:scaleX(0.9391);transform-origin:0 0;">Box</div>
<div class="t" style="left:622.4000000000001px;top:120.4px;font-size:5px;color:#1a1a1a;transform:scaleX(0.9119);transform-origin:0 0;">Cone</div>
<div class="a" style="left:582.5px;top:128.2px;width:27.5px;height:6.8px;background:#c9c9c9;border:1px solid #ececec;border-right-color:#8a8a8a;border-bottom-color:#8a8a8a"></div>
<div class="a" style="left:614px;top:128.2px;width:27.5px;height:6.8px;background:#c9c9c9;border:1px solid #ececec;border-right-color:#8a8a8a;border-bottom-color:#8a8a8a"></div>
<div class="t" style="left:589.0px;top:129.2px;font-size:5px;color:#1a1a1a;transform:scaleX(0.9054);transform-origin:0 0;">Sphere</div>
<div class="t" style="left:616.5px;top:129.2px;font-size:5px;color:#1a1a1a;transform:scaleX(0.8836);transform-origin:0 0;">GeoSphere</div>
<div class="a" style="left:582.5px;top:136.8px;width:27.5px;height:6.8px;background:#c9c9c9;border:1px solid #ececec;border-right-color:#8a8a8a;border-bottom-color:#8a8a8a"></div>
<div class="a" style="left:614px;top:136.8px;width:27.5px;height:6.8px;background:#c9c9c9;border:1px solid #ececec;border-right-color:#8a8a8a;border-bottom-color:#8a8a8a"></div>
<div class="t" style="left:588.5px;top:137.8px;font-size:5px;color:#1a1a1a;transform:scaleX(0.8504);transform-origin:0 0;">Cylinder</div>
<div class="t" style="left:622.9000000000001px;top:137.8px;font-size:5px;color:#1a1a1a;transform:scaleX(0.9270);transform-origin:0 0;">Tube</div>
<div class="a" style="left:582.5px;top:145px;width:27.5px;height:6.8px;background:#c9c9c9;border:1px solid #ececec;border-right-color:#8a8a8a;border-bottom-color:#8a8a8a"></div>
<div class="a" style="left:614px;top:145px;width:27.5px;height:6.8px;background:#c9c9c9;border:1px solid #ececec;border-right-color:#8a8a8a;border-bottom-color:#8a8a8a"></div>
<div class="t" style="left:590.7px;top:146.0px;font-size:5px;color:#1a1a1a;transform:scaleX(0.9236);transform-origin:0 0;">Torus</div>
<div class="t" style="left:620.2px;top:146.0px;font-size:5px;color:#1a1a1a;transform:scaleX(0.8777);transform-origin:0 0;">Pyramid</div>
<div class="a" style="left:582.5px;top:153.5px;width:27.5px;height:6.8px;background:#c9c9c9;border:1px solid #ececec;border-right-color:#8a8a8a;border-bottom-color:#8a8a8a"></div>
<div class="a" style="left:614px;top:153.5px;width:27.5px;height:6.8px;background:#c9c9c9;border:1px solid #ececec;border-right-color:#8a8a8a;border-bottom-color:#8a8a8a"></div>
<div class="t" style="left:589.0px;top:154.5px;font-size:5px;color:#1a1a1a;transform:scaleX(0.9723);transform-origin:0 0;">Teapot</div>
<div class="t" style="left:622.4000000000001px;top:154.5px;font-size:5px;color:#1a1a1a;transform:scaleX(0.8830);transform-origin:0 0;">Plane</div>
<div class="a" style="left:578.5px;top:163px;width:67px;height:22px;border:1px solid #a8a8a8;border-right-color:#e8e8e8;border-bottom-color:#e8e8e8"></div>
<div class="a" style="left:580px;top:165.2px;width:64px;height:6.5px;background:#bdbdbd;border:1px solid #4e4e4e;box-shadow:inset 1px 1px 0 #e4e4e4"></div>
<div class="t" style="left:582.2px;top:165.79999999999998px;font-size:5px;color:#222;">-</div>
<div class="t" style="left:596.5px;top:166.29999999999998px;font-size:5px;color:#1a1a1a;transform:scaleX(0.8460);transform-origin:0 0;">Name and Color</div>
<div class="a" style="left:581.8px;top:174.4px;width:53.5px;height:8.2px;background:#f4f4f4;border:1px solid #5a5a5a;border-right-color:#e4e4e4;border-bottom-color:#e4e4e4"></div>
<div class="a" style="left:636.7px;top:174.4px;width:6.5px;height:8.2px;background:#a8a4b0;border:1px solid #d8d8d8"></div>
<div class="a" style="left:578.5px;top:186px;width:67px;height:19px;border:1px solid #a8a8a8;border-right-color:#e8e8e8;border-bottom-color:#e8e8e8"></div>
<div class="a" style="left:580px;top:189px;width:64px;height:5.800000000000011px;background:#bdbdbd;border:1px solid #4e4e4e;box-shadow:inset 1px 1px 0 #e4e4e4"></div>
<div class="t" style="left:582.2px;top:189.6px;font-size:5px;color:#222;">-</div>
<div class="t" style="left:595.5px;top:190.1px;font-size:5px;color:#1a1a1a;transform:scaleX(0.8872);transform-origin:0 0;">Creation Method</div>
<svg class="a" style="left:587.5px;top:197px" width="8" height="8" viewBox="0 0 8 8"><circle cx="3.3" cy="3.5" r="2.6" fill="#f4f4f4" stroke="#7a7a7a" stroke-width="0.7"/></svg>
<div class="t" style="left:595.8px;top:198.3px;font-size:5px;color:#222;transform:scaleX(0.8366);transform-origin:0 0;">Cube</div>
<svg class="a" style="left:615.5px;top:197px" width="8" height="8" viewBox="0 0 8 8"><circle cx="3.2" cy="3.5" r="2.6" fill="#f4f4f4" stroke="#7a7a7a" stroke-width="0.7"/><circle cx="3.2" cy="3.5" r="1.2" fill="#000"/></svg>
<div class="t" style="left:623.6px;top:198.3px;font-size:5px;color:#222;transform:scaleX(0.8812);transform-origin:0 0;">Box</div>
<div class="a" style="left:580px;top:209px;width:64px;height:6.199999999999989px;background:#bdbdbd;border:1px solid #4e4e4e;box-shadow:inset 1px 1px 0 #e4e4e4"></div>
<div class="t" style="left:582.2px;top:209.6px;font-size:5px;color:#222;">+</div>
<div class="t" style="left:596.7px;top:210.1px;font-size:5px;color:#1a1a1a;transform:scaleX(0.9458);transform-origin:0 0;">Keyboard Entry</div>
<div class="a" style="left:578.5px;top:215px;width:67px;height:85px;border:1px solid #a8a8a8;border-right-color:#e8e8e8;border-bottom-color:#e8e8e8"></div>
<div class="a" style="left:580px;top:217px;width:64px;height:6.199999999999989px;background:#bdbdbd;border:1px solid #4e4e4e;box-shadow:inset 1px 1px 0 #e4e4e4"></div>
<div class="t" style="left:582.2px;top:217.6px;font-size:5px;color:#222;">-</div>
<div class="t" style="left:601.2px;top:218.1px;font-size:5px;color:#1a1a1a;transform:scaleX(0.8745);transform-origin:0 0;">Parameters</div>
<div class="t" style="left:596.4000000000001px;top:228.1px;font-size:5px;color:#1a1a1a;transform:scaleX(0.9408);transform-origin:0 0;">Length:</div>
<div class="a" style="left:612px;top:227.2px;width:21.5px;height:6.4px;background:#eeeeee;border:1px solid #505050;border-right-color:#e0e0e0;border-bottom-color:#e0e0e0"></div>
<div class="a" style="left:634.5px;top:227.2px;width:5.5px;height:6.6px;background:#cccccc;border:1px solid #f0f0f0;border-right-color:#707070;border-bottom-color:#707070"></div>
<svg class="a" style="left:635.5px;top:228.2px" width="3" height="5" viewBox="0 0 3 5"><path d="M0 2H3L1.5 0.5ZM0 3H3L1.5 4.5Z" fill="#000"/></svg>
<div class="t" style="left:613.2px;top:228.1px;font-size:5px;color:#333;">1.0</div>
<div class="t" style="left:598.5px;top:236.70000000000002px;font-size:5px;color:#1a1a1a;transform:scaleX(0.9596);transform-origin:0 0;">Width:</div>
<div class="a" style="left:612px;top:235.8px;width:21.5px;height:6.4px;background:#eeeeee;border:1px solid #505050;border-right-color:#e0e0e0;border-bottom-color:#e0e0e0"></div>
<div class="a" style="left:634.5px;top:235.8px;width:5.5px;height:6.6px;background:#cccccc;border:1px solid #f0f0f0;border-right-color:#707070;border-bottom-color:#707070"></div>
<svg class="a" style="left:635.5px;top:236.8px" width="3" height="5" viewBox="0 0 3 5"><path d="M0 2H3L1.5 0.5ZM0 3H3L1.5 4.5Z" fill="#000"/></svg>
<div class="t" style="left:613.2px;top:236.70000000000002px;font-size:5px;color:#333;">1.0</div>
<div class="t" style="left:597.5px;top:245.1px;font-size:5px;color:#1a1a1a;transform:scaleX(0.9215);transform-origin:0 0;">Height:</div>
<div class="a" style="left:612px;top:244.2px;width:21.5px;height:6.4px;background:#eeeeee;border:1px solid #505050;border-right-color:#e0e0e0;border-bottom-color:#e0e0e0"></div>
<div class="a" style="left:634.5px;top:244.2px;width:5.5px;height:6.6px;background:#cccccc;border:1px solid #f0f0f0;border-right-color:#707070;border-bottom-color:#707070"></div>
<svg class="a" style="left:635.5px;top:245.2px" width="3" height="5" viewBox="0 0 3 5"><path d="M0 2H3L1.5 0.5ZM0 3H3L1.5 4.5Z" fill="#000"/></svg>
<div class="t" style="left:613.2px;top:245.1px;font-size:5px;color:#333;">1.0</div>
<div class="t" style="left:585.7px;top:256.9px;font-size:5px;color:#1a1a1a;transform:scaleX(0.8959);transform-origin:0 0;">Length Segs:</div>
<div class="a" style="left:612px;top:256px;width:21.5px;height:6.4px;background:#eeeeee;border:1px solid #505050;border-right-color:#e0e0e0;border-bottom-color:#e0e0e0"></div>
<div class="a" style="left:634.5px;top:256px;width:5.5px;height:6.6px;background:#cccccc;border:1px solid #f0f0f0;border-right-color:#707070;border-bottom-color:#707070"></div>
<svg class="a" style="left:635.5px;top:257px" width="3" height="5" viewBox="0 0 3 5"><path d="M0 2H3L1.5 0.5ZM0 3H3L1.5 4.5Z" fill="#000"/></svg>
<div class="t" style="left:613.2px;top:256.9px;font-size:5px;color:#777;">1</div>
<div class="t" style="left:587.7px;top:265.2px;font-size:5px;color:#1a1a1a;transform:scaleX(0.9048);transform-origin:0 0;">Width Segs:</div>
<div class="a" style="left:612px;top:264.3px;width:21.5px;height:6.4px;background:#eeeeee;border:1px solid #505050;border-right-color:#e0e0e0;border-bottom-color:#e0e0e0"></div>
<div class="a" style="left:634.5px;top:264.3px;width:5.5px;height:6.6px;background:#cccccc;border:1px solid #f0f0f0;border-right-color:#707070;border-bottom-color:#707070"></div>
<svg class="a" style="left:635.5px;top:265.3px" width="3" height="5" viewBox="0 0 3 5"><path d="M0 2H3L1.5 0.5ZM0 3H3L1.5 4.5Z" fill="#000"/></svg>
<div class="t" style="left:613.2px;top:265.2px;font-size:5px;color:#777;">1</div>
<div class="t" style="left:586.7px;top:273.4px;font-size:5px;color:#1a1a1a;transform:scaleX(0.8869);transform-origin:0 0;">Height Segs:</div>
<div class="a" style="left:612px;top:272.5px;width:21.5px;height:6.4px;background:#eeeeee;border:1px solid #505050;border-right-color:#e0e0e0;border-bottom-color:#e0e0e0"></div>
<div class="a" style="left:634.5px;top:272.5px;width:5.5px;height:6.6px;background:#cccccc;border:1px solid #f0f0f0;border-right-color:#707070;border-bottom-color:#707070"></div>
<svg class="a" style="left:635.5px;top:273.5px" width="3" height="5" viewBox="0 0 3 5"><path d="M0 2H3L1.5 0.5ZM0 3H3L1.5 4.5Z" fill="#000"/></svg>
<div class="t" style="left:613.2px;top:273.4px;font-size:5px;color:#777;">1</div>
<div class="a" style="left:582px;top:283.5px;width:5px;height:5px;background:#f2f2f2;border:1px solid #707070;border-right-color:#fff;border-bottom-color:#fff"></div>
<svg class="a" style="left:582.5px;top:284px" width="4" height="4" viewBox="0 0 4 4"><path d="M0.5 2 L1.7 3.3 L3.6 0.6" stroke="#000" stroke-width="0.9" fill="none"/></svg>
<div class="t" style="left:589.8px;top:284.2px;font-size:5px;color:#222;transform:scaleX(0.8290);transform-origin:0 0;">Generate Mapping Coords.</div>
<div class="a" style="left:582px;top:292px;width:5px;height:5px;background:#f2f2f2;border:1px solid #707070;border-right-color:#fff;border-bottom-color:#fff"></div>
<div class="t" style="left:589.8px;top:292.7px;font-size:5px;color:#222;transform:scaleX(0.8588);transform-origin:0 0;">Real-World Map Size</div>
<div class="a" style="left:578px;top:461px;width:71px;height:1px;background:#e8e8e8"></div>
<div class="a" style="left:17px;top:445px;width:559px;height:7px;background:#d0d0d0"></div>
<div class="a" style="left:17.5px;top:445px;width:6px;height:7px;background:#d0d0d0;border-bottom:1px solid #a8a8a8"></div>
<div class="t" style="left:19.3px;top:445.8px;font-size:5px;color:#444;">&lt;</div>
<div class="a" style="left:23.5px;top:445px;width:51.5px;height:7.2px;background:#cdcdcd;border:1px solid #f0f0f0;border-right-color:#3a3a3a;border-bottom-color:#3a3a3a"></div>
<div class="t" style="left:41.7px;top:446.4px;font-size:5px;color:#222;transform:scaleX(1.0198);transform-origin:0 0;">0 / 100</div>
<div class="a" style="left:75.5px;top:445px;width:5px;height:7px;background:#d0d0d0;border-bottom:1px solid #a8a8a8"></div>
<div class="t" style="left:76.8px;top:445.8px;font-size:5px;color:#444;">&gt;</div>
<div class="a" style="left:17px;top:452px;width:559px;height:10px;background:#cccccc"></div>
<svg class="a" style="left:22px;top:454px" width="9" height="8" viewBox="0 0 9 8"><rect x="1" y="0.5" width="7" height="2.5" fill="#f4f4f4" stroke="#202020" stroke-width="0.7"/><path d="M1 4.5H8M1 6.5H8" stroke="#202020" stroke-width="0.9"/></svg>
<svg class="a" style="left:0px;top:0px" width="650" height="488" viewBox="0 0 650 488"><path d="M40.10 453V457M45.24 453.5V456.5M50.38 453.5V456.5M55.52 453.5V456.5M60.66 453.5V456.5M65.80 453V457M70.94 453.5V456.5M76.08 453.5V456.5M81.22 453.5V456.5M86.36 453.5V456.5M91.50 453V457M96.64 453.5V456.5M101.78 453.5V456.5M106.92 453.5V456.5M112.06 453.5V456.5M117.20 453V457M122.34 453.5V456.5M127.48 453.5V456.5M132.62 453.5V456.5M137.76 453.5V456.5M142.90 453V457M148.04 453.5V456.5M153.18 453.5V456.5M158.32 453.5V456.5M163.46 453.5V456.5M168.60 453V457M173.74 453.5V456.5M178.88 453.5V456.5M184.02 453.5V456.5M189.16 453.5V456.5M194.30 453V457M199.44 453.5V456.5M204.58 453.5V456.5M209.72 453.5V456.5M214.86 453.5V456.5M220.00 453V457M225.14 453.5V456.5M230.28 453.5V456.5M235.42 453.5V456.5M240.56 453.5V456.5M245.70 453V457M250.84 453.5V456.5M255.98 453.5V456.5M261.12 453.5V456.5M266.26 453.5V456.5M271.40 453V457M276.54 453.5V456.5M281.68 453.5V456.5M286.82 453.5V456.5M291.96 453.5V456.5M297.10 453V457M302.24 453.5V456.5M307.38 453.5V456.5M312.52 453.5V456.5M317.66 453.5V456.5M322.80 453V457M327.94 453.5V456.5M333.08 453.5V456.5M338.22 453.5V456.5M343.36 453.5V456.5M348.50 453V457M353.64 453.5V456.5M358.78 453.5V456.5M363.92 453.5V456.5M369.06 453.5V456.5M374.20 453V457M379.34 453.5V456.5M384.48 453.5V456.5M389.62 453.5V456.5M394.76 453.5V456.5M399.90 453V457M405.04 453.5V456.5M410.18 453.5V456.5M415.32 453.5V456.5M420.46 453.5V456.5M425.60 453V457M430.74 453.5V456.5M435.88 453.5V456.5M441.02 453.5V456.5M446.16 453.5V456.5M451.30 453V457M456.44 453.5V456.5M461.58 453.5V456.5M466.72 453.5V456.5M471.86 453.5V456.5M477.00 453V457M482.14 453.5V456.5M487.28 453.5V456.5M492.42 453.5V456.5M497.56 453.5V456.5M502.70 453V457M507.84 453.5V456.5M512.98 453.5V456.5M518.12 453.5V456.5M523.26 453.5V456.5M528.40 453V457M533.54 453.5V456.5M538.68 453.5V456.5M543.82 453.5V456.5M548.96 453.5V456.5M554.10 453V457" stroke="#8a8a8a" stroke-width="0.6"/></svg>
<div class="t" style="left:-34.2px;width:200px;text-align:center;top:457.8px;font-size:5px;color:#333;">5</div>
<div class="t" style="left:-8.5px;width:200px;text-align:center;top:457.8px;font-size:5px;color:#333;">10</div>
<div class="t" style="left:17.19999999999999px;width:200px;text-align:center;top:457.8px;font-size:5px;color:#333;">15</div>
<div class="t" style="left:42.900000000000006px;width:200px;text-align:center;top:457.8px;font-size:5px;color:#333;">20</div>
<div class="t" style="left:68.6px;width:200px;text-align:center;top:457.8px;font-size:5px;color:#333;">25</div>
<div class="t" style="left:94.29999999999998px;width:200px;text-align:center;top:457.8px;font-size:5px;color:#333;">30</div>
<div class="t" style="left:119.99999999999997px;width:200px;text-align:center;top:457.8px;font-size:5px;color:#333;">35</div>
<div class="t" style="left:145.7px;width:200px;text-align:center;top:457.8px;font-size:5px;color:#333;">40</div>
<div class="t" style="left:171.39999999999998px;width:200px;text-align:center;top:457.8px;font-size:5px;color:#333;">45</div>
<div class="t" style="left:197.10000000000002px;width:200px;text-align:center;top:457.8px;font-size:5px;color:#333;">50</div>
<div class="t" style="left:222.8px;width:200px;text-align:center;top:457.8px;font-size:5px;color:#333;">55</div>
<div class="t" style="left:248.5px;width:200px;text-align:center;top:457.8px;font-size:5px;color:#333;">60</div>
<div class="t" style="left:274.2px;width:200px;text-align:center;top:457.8px;font-size:5px;color:#333;">65</div>
<div class="t" style="left:299.9px;width:200px;text-align:center;top:457.8px;font-size:5px;color:#333;">70</div>
<div class="t" style="left:325.6px;width:200px;text-align:center;top:457.8px;font-size:5px;color:#333;">75</div>
<div class="t" style="left:351.3px;width:200px;text-align:center;top:457.8px;font-size:5px;color:#333;">80</div>
<div class="t" style="left:377.0px;width:200px;text-align:center;top:457.8px;font-size:5px;color:#333;">85</div>
<div class="t" style="left:402.7px;width:200px;text-align:center;top:457.8px;font-size:5px;color:#333;">90</div>
<div class="t" style="left:428.4px;width:200px;text-align:center;top:457.8px;font-size:5px;color:#333;">95</div>
<div class="t" style="left:454.1px;width:200px;text-align:center;top:457.8px;font-size:5px;color:#333;">100</div>
<svg class="a" style="left:38px;top:453px" width="5" height="10" viewBox="0 0 5 10"><rect x="0.5" y="0.3" width="4" height="3" fill="#8aa0d0"/><rect x="0.8" y="3.5" width="3.4" height="5.5" fill="none" stroke="#3050b0" stroke-width="0.9" rx="1.5"/></svg>
<div class="a" style="left:0px;top:462px;width:17px;height:1px;background:#404040"></div>
<div class="a" style="left:2px;top:464px;width:43px;height:9px;background:#e8cccc;border:1px solid #f4f4f4"></div>
<div class="a" style="left:2px;top:473.5px;width:43px;height:9px;background:#fafafa"></div>
<div class="a" style="left:47px;top:465px;width:259px;height:8px;background:#c0c0c0;border:1px solid #909090;border-right-color:#e8e8e8;border-bottom-color:#e8e8e8"></div>
<div class="t" style="left:50.1px;top:466.2px;font-size:5.2px;color:#1a1a1a;transform:scaleX(0.8522);transform-origin:0 0;">None Selected</div>
<div class="a" style="left:47px;top:475px;width:373px;height:8px;background:#c0c0c0;border:1px solid #a0a0a0;border-right-color:#e8e8e8;border-bottom-color:#e8e8e8"></div>
<div class="t" style="left:50.1px;top:476.2px;font-size:5.2px;color:#1a1a1a;transform:scaleX(0.8373);transform-origin:0 0;">Click and drag to begin creation process</div>
<svg class="a" style="left:310px;top:465px" width="6" height="7" viewBox="0 0 6 7"><rect x="0.5" y="3" width="5" height="3.5" fill="#303030"/><path d="M1.5 3V2 Q3 0 4.5 2V3" stroke="#303030" fill="none" stroke-width="0.8"/></svg>
<div class="a" style="left:319px;top:465px;width:7px;height:7px;background:#f0f0f0;border:1px solid #303030"></div>
<svg class="a" style="left:320px;top:466px" width="5" height="5" viewBox="0 0 5 5"><path d="M2.5 0.5V4.5M0.5 2.5H4.5" stroke="#000" stroke-width="0.8"/></svg>
<div class="t" style="left:329.5px;top:466px;font-size:5px;color:#222;">X:</div>
<div class="a" style="left:334px;top:465px;width:23px;height:8px;background:#e8e8e8;border:1px solid #303030;border-right-color:#f4f4f4;border-bottom-color:#f4f4f4"></div>
<div class="t" style="left:336px;top:466.2px;font-size:5px;color:#888;">-60.792</div>
<div class="t" style="left:363px;top:466px;font-size:5px;color:#222;">Y:</div>
<div class="a" style="left:367.5px;top:465px;width:23px;height:8px;background:#e8e8e8;border:1px solid #303030;border-right-color:#f4f4f4;border-bottom-color:#f4f4f4"></div>
<div class="t" style="left:369.5px;top:466.2px;font-size:5px;color:#888;">-0.0</div>
<div class="t" style="left:397px;top:466px;font-size:5px;color:#222;">Z:</div>
<div class="a" style="left:401.5px;top:465px;width:22px;height:8px;background:#e8e8e8;border:1px solid #303030;border-right-color:#f4f4f4;border-bottom-color:#f4f4f4"></div>
<div class="t" style="left:403.5px;top:466.2px;font-size:5px;color:#888;">23.715</div>
<div class="a" style="left:430px;top:464.7px;width:40px;height:8.1px;background:#c6c6c6;border-top:1px solid #a8a8a8;border-left:1px solid #b0b0b0"></div>
<div class="t" style="left:431.6px;top:466.3px;font-size:5.2px;color:#1a1a1a;transform:scaleX(0.8755);transform-origin:0 0;">Grid = 10.0</div>
<div class="a" style="left:430px;top:474.8px;width:40px;height:8.2px;background:#c6c6c6;border-top:1px solid #a8a8a8;border-left:1px solid #b0b0b0"></div>
<div class="t" style="left:431.6px;top:476.2px;font-size:5.2px;color:#1a1a1a;transform:scaleX(0.9043);transform-origin:0 0;">Add Time Tag</div>
<div class="a" style="left:420px;top:475px;width:1px;height:8px;background:#505050"></div>
<svg class="a" style="left:422px;top:475px" width="5" height="8" viewBox="0 0 5 8"><path d="M2.5 1V7M1 5.5L2.5 7L4 5.5" stroke="#909090" fill="none" stroke-width="0.6"/></svg>
<div class="a" style="left:472px;top:464px;width:17px;height:18px;background:#d2d2d2;border:1px solid #f0f0f0;border-right-color:#909090;border-bottom-color:#909090"></div>
<div class="t" style="left:474.5px;top:469.5px;font-size:5px;color:#a8a8a8;">Orap</div>
<div class="t" style="left:490.5px;top:466.4px;font-size:5.2px;color:#1a1a1a;transform:scaleX(0.8736);transform-origin:0 0;">Auto Key</div>
<div class="a" style="left:511px;top:464.5px;width:45px;height:8px;background:#f0f0f0;border:1px solid #404040;border-right-color:#e0e0e0;border-bottom-color:#e0e0e0"></div>
<div class="t" style="left:511.7px;top:466.2px;font-size:5.2px;color:#1a1a1a;transform:scaleX(0.8910);transform-origin:0 0;">Selected</div>
<div class="a" style="left:550px;top:465.5px;width:5px;height:6px;background:#e0e0e0"></div>
<svg class="a" style="left:551px;top:467.5px" width="4" height="3" viewBox="0 0 4 3"><path d="M0 0H4L2 2.5Z" fill="#000"/></svg>
<div class="a" style="left:489.6px;top:473.8px;width:20.2px;height:8.6px;background:#c8c8c8;border-left:1px solid #a8a8a8"></div>
<div class="t" style="left:491.6px;top:475.3px;font-size:5.2px;color:#1a1a1a;transform:scaleX(0.8915);transform-origin:0 0;">Set Key</div>
<svg class="a" style="left:512px;top:474px" width="8" height="8" viewBox="0 0 8 8"><path d="M1 7 L6 2" stroke="#c04040" stroke-width="1.2"/><circle cx="5.5" cy="2.5" r="1.5" fill="none" stroke="#8060a0" stroke-width="0.8"/><circle cx="7" cy="7.5" r="0.5" fill="#000"/></svg>
<div class="a" style="left:520.8px;top:473.8px;width:37px;height:8.6px;background:#c8c8c8;border-left:1px solid #b0b0b0"></div>
<div class="t" style="left:527.4px;top:475.3px;font-size:5.2px;color:#1a1a1a;transform:scaleX(0.8186);transform-origin:0 0;">Key Filters...</div>
<svg class="a" style="left:559px;top:464px" width="50" height="9" viewBox="0 0 50 9"><path d="M2.5 2V7M3 4.5L5.5 2.5V6.5ZM5.5 4.5L8 2.5V6.5Z" fill="#111" stroke="#111" stroke-width="0.5"/><path d="M14 4.5L17 2.5V6.5Z" fill="#111"/><path d="M17 3.5H19V5.5H17" fill="#111"/><rect x="21.5" y="1" width="7" height="7" fill="#d8d8d8" stroke="#222" stroke-width="1"/><path d="M24 2.8L26.8 4.5L24 6.2Z" fill="#111"/><path d="M31 3.5H33V5.5H31ZM33 2.5L36 4.5L33 6.5Z" fill="#111"/><path d="M41 2.5L43.5 4.5L41 6.5ZM43.5 2.5L46 4.5L43.5 6.5Z" fill="#111"/><path d="M46.5 2V7" stroke="#111"/></svg>
<div class="a" style="left:610px;top:464px;width:1px;height:18px;background:#909090"></div>
<div class="a" style="left:558px;top:464px;width:1px;height:18px;background:#a0a0a0"></div>
<svg class="a" style="left:611px;top:463px" width="38" height="10" viewBox="0 0 38 10"><circle cx="4" cy="4" r="2.5" fill="none" stroke="#333" stroke-width="0.9"/><path d="M5.5 5.5L8 8" stroke="#3050a0" stroke-width="1.2"/><path d="M11 8L15 1.5L18 8Z" fill="#d8c8c8" stroke="#903030" stroke-width="0.6"/><circle cx="14" cy="3" r="1.5" fill="none" stroke="#555" stroke-width="0.6"/><rect x="20" y="1.5" width="7" height="6" fill="#c8d4e8" stroke="#3050a0" stroke-width="0.8"/><path d="M19.5 1L21 2.5M27.5 1L26 2.5M19.5 8L21 6.5M27.5 8L26 6.5" stroke="#333" stroke-width="0.6"/><rect x="29.5" y="3" width="6" height="5.5" fill="#c8d4e8" stroke="#3050a0" stroke-width="0.8"/><rect x="32" y="0.5" width="4" height="3.5" fill="#e88080" stroke="#903030" stroke-width="0.5"/></svg>
<div class="a" style="left:560px;top:474px;width:8px;height:7px;background:#c8c8c8"></div>
<svg class="a" style="left:560px;top:475px" width="8" height="6" viewBox="0 0 8 6"><path d="M0.5 3L3 1V5ZM3 3L5.5 1V5Z" fill="#111"/><path d="M6 1V5" stroke="#111" stroke-width="0.8"/></svg>
<div class="a" style="left:570px;top:474px;width:28px;height:8px;background:#eeeeee;border:1px solid #303030;border-right-color:#f0f0f0;border-bottom-color:#f0f0f0"></div>
<div class="t" style="left:572px;top:475px;font-size:5px;color:#999;">0</div>
<div class="a" style="left:597px;top:474px;width:4px;height:8px;background:#c8c8c8"></div>
<svg class="a" style="left:597px;top:475px" width="4" height="6" viewBox="0 0 4 6"><path d="M0 2.3H4L2 0.5ZM0 3.7H4L2 5.5Z" fill="#333"/></svg>
<svg class="a" style="left:603px;top:474px" width="7" height="8" viewBox="0 0 7 8"><rect x="0.5" y="0.5" width="6" height="7" fill="#c0a0a0" stroke="#505050" stroke-width="0.6"/><rect x="3.5" y="1.5" width="2.5" height="5" fill="#3050a0"/></svg>
<svg class="a" style="left:611px;top:473px" width="38" height="10" viewBox="0 0 38 10"><rect x="1.5" y="1" width="6" height="7" fill="#e8eef8" stroke="#202020" stroke-width="0.9"/><path d="M2.5 7 L4.5 3 L6.5 7" stroke="#303030" fill="none" stroke-width="0.6"/><path d="M11 8 Q10 3 12 2 Q14 0.5 15 2 Q17 1 17.5 4 L16 8Z" fill="#f0f0f0" stroke="#333" stroke-width="0.7"/><path d="M21 8 L24 2 L27 8Z" fill="#e0c030" stroke="#404040" stroke-width="0.6"/><path d="M20 5H28" stroke="#3050a0" stroke-width="0.8"/><rect x="29.5" y="1" width="7" height="7" fill="#e8e8f8" stroke="#303060" stroke-width="0.8"/><rect x="31" y="4" width="4" height="3" fill="#3050a0"/></svg>
<div class="a" style="left:0px;top:483.5px;width:650px;height:4.5px;background:#7a7444"></div>
<div class="a" style="left:75px;top:483.5px;width:63px;height:4.5px;background:#a8a27c"></div>
<div class="a" style="left:196px;top:483.5px;width:64px;height:4.5px;background:#968f60"></div>
<div class="a" style="left:261px;top:483.5px;width:65px;height:4.5px;background:#8e8858"></div>
<div class="a" style="left:330px;top:483.5px;width:110px;height:4.5px;background:#77763e"></div>
<div class="a" style="left:8px;top:485px;width:4px;height:3px;background:#d8d8d0"></div>
<div class="a" style="left:64px;top:485px;width:4px;height:3px;background:#a8c8e0"></div>
<div class="a" style="left:147px;top:485px;width:4px;height:3px;background:#503060"></div>
<div class="a" style="left:167px;top:485px;width:4px;height:3px;background:#405080"></div>
<div class="a" style="left:187px;top:485px;width:4px;height:3px;background:#506080"></div>
<div class="a" style="left:268px;top:485px;width:4px;height:3px;background:#202020"></div>
<div class="a" style="left:517px;top:485px;width:4px;height:3px;background:#e08040"></div>
<div class="a" style="left:570px;top:485px;width:4px;height:3px;background:#303030"></div>
<div class="a" style="left:600px;top:485px;width:4px;height:3px;background:#c0c0b0"></div>
<div class="a" style="left:0px;top:0px;width:1px;height:488px;background:#000"></div>
</body></html>
